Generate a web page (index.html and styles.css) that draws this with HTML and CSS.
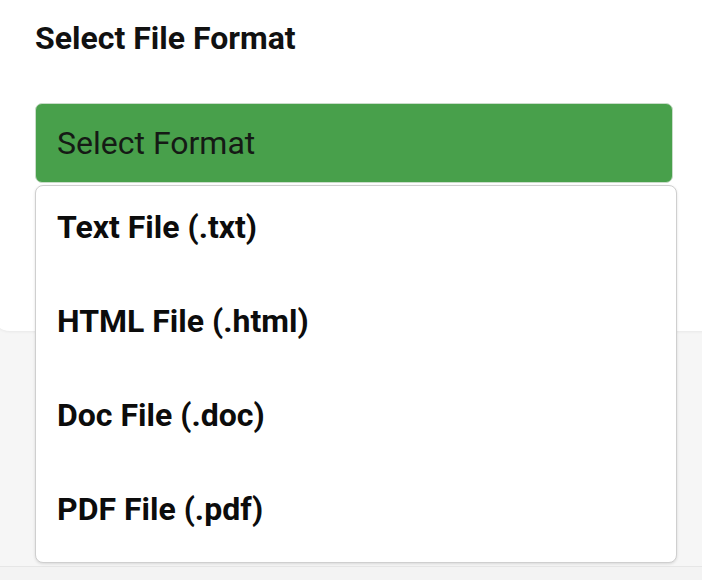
FILE: index.html
```html
<!DOCTYPE html>
<html>
<head>
<meta charset="utf-8">
<link rel="stylesheet" href="styles.css">
</head>
<body>
<div class="page">
  <div class="card">
    <h2 class="title">Select File Format</h2>
    <div class="field">
      <div class="select">Select Format</div>
      <ul class="menu">
        <li class="item">Text File (.txt)</li>
        <li class="item">HTML File (.html)</li>
        <li class="item">Doc File (.doc)</li>
        <li class="item">PDF File (.pdf)</li>
      </ul>
    </div>
  </div>
  <div class="footer"></div>
</div>
</body>
</html>
```
FILE: styles.css
```css
* { box-sizing: border-box; }
html, body {
  margin: 0;
  padding: 0;
  background: #f6f6f6;
  font-family: Roboto, "Noto Sans", sans-serif;
  width: 702px;
  height: 580px;
  overflow: hidden;
}
.page {
  position: relative;
  width: 702px;
  height: 580px;
}
.card {
  margin-left: -8px;
  width: 730px;
  height: 331px;
  background: #ffffff;
  border-radius: 0 0 18px 18px;
  box-shadow: 0 1px 3px rgba(0,0,0,0.06);
  padding: 18px 0 0 43px;
}
.title {
  margin: 0;
  font-size: 32px;
  font-weight: 700;
  line-height: 40px;
  color: #111;
}
.field {
  position: relative;
  margin-top: 45px;
  width: 638px;
}
.select {
  height: 80px;
  background: #48a04b;
  border: 1px solid #c9dcc9;
  border-radius: 7px;
  padding-left: 21px;
  display: flex;
  align-items: center;
  font-size: 32px;
  color: #151a15;
}
.menu {
  position: absolute;
  left: 0;
  top: 82px;
  width: 642px;
  height: 378px;
  margin: 0;
  padding: 0;
  list-style: none;
  background: #fff;
  border: 1px solid #cfcfcf;
  border-radius: 8px;
  box-shadow: 0 1px 3px rgba(0,0,0,0.12);
  display: flex;
  flex-direction: column;
  overflow: hidden;
  z-index: 2;
}
.item {
  flex: 0 0 94px;
  line-height: 82px;
  padding-left: 21px;
  font-size: 32px;
  font-weight: 700;
  color: #0c0c0c;
}
.footer {
  position: absolute;
  left: 0;
  right: 0;
  top: 566px;
  bottom: 0;
  background: #f3f3f3;
  border-top: 1px solid #e6e6e6;
}
```
